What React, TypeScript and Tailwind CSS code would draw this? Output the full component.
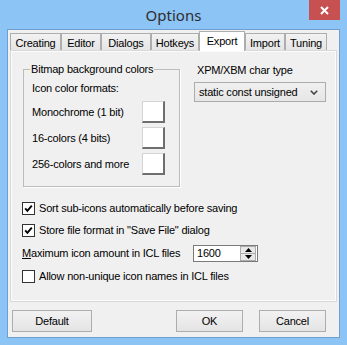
import React from 'react';

const tabs = [
  { name: 'Creating', w: 'w-[51px]' },
  { name: 'Editor', w: 'w-[40px]' },
  { name: 'Dialogs', w: 'w-[50px]' },
  { name: 'Hotkeys', w: 'w-[48px]' },
  { name: 'Export', w: 'w-[46px]', active: true },
  { name: 'Import', w: 'w-[40px]' },
  { name: 'Tuning', w: 'w-[42px]' },
];

function ColorBox() {
  return (
    <div className="w-[23px] h-[22px] bg-white border-l border-t border-[#d4d4d4] border-r-2 border-b-2 border-r-[#6e6e6e] border-b-[#6e6e6e]" />
  );
}

function CheckBox({ checked }: { checked?: boolean }) {
  return (
    <div className="w-[13px] h-[13px] border border-[#333] bg-white flex items-center justify-center">
      {checked && (
        <svg width="11" height="11" viewBox="0 0 11 11">
          <polyline points="2.2,5.4 4.4,7.8 8.8,2.6" fill="none" stroke="#000" strokeWidth="1.9" />
        </svg>
      )}
    </div>
  );
}

function Button({ label, className }: { label: string; className: string }) {
  return (
    <button className={`h-[22px] border border-[#adadad] bg-gradient-to-b from-[#f2f2f2] to-[#e4e4e4] text-black flex items-center justify-center ${className}`}>
      {label}
    </button>
  );
}

export default function App() {
  return (
    <div className="w-[347px] h-[345px] bg-[#8cc4f6] overflow-hidden font-['Liberation_Sans',Arial,sans-serif] text-[11px] tracking-[-0.2px] text-black leading-[13px]">

      {/* Title bar */}
      <div className="h-[29px] grid grid-cols-[1fr_auto_1fr]">
        <div />
        <div className="flex items-center font-['Noto_Sans',sans-serif] text-[15px] tracking-normal text-[#2e2e2e] pt-[1px]">Options</div>
        <div className="flex justify-end items-start pr-[7px]">
          <div className="w-[31px] h-[20px] bg-[#c75050] flex items-center justify-center">
            <svg width="9" height="9" viewBox="0 0 9 9">
              <path d="M1 1 L8 8 M8 1 L1 8" stroke="#fff" strokeWidth="2" />
            </svg>
          </div>
        </div>
      </div>

      {/* Client area */}
      <div className="ml-[7px] w-[333px] h-[309px] border border-[#6f9fcf] bg-[#f0f0f0] flex flex-col">

        {/* Tabs */}
        <div className="h-[20px] flex items-end pl-[2px]">
          {tabs.map(t =>
            t.active ? (
              <div key={t.name} className={`${t.w} h-[20px] -mb-[1px] relative z-10 bg-white border border-b-0 border-[#adadad] flex justify-center pt-[3px]`}>
                {t.name}
              </div>
            ) : (
              <div key={t.name} className={`${t.w} h-[17px] bg-gradient-to-b from-[#f2f2f2] to-[#e5e5e5] border border-b-0 border-[#adadad] flex justify-center pt-[3px]`}>
                {t.name}
              </div>
            )
          )}
        </div>

        {/* Panel */}
        <div className="ml-[2px] w-[327px] h-[252px] border border-[#d9d9d9] bg-[#f0f0f0] shadow-[inset_0_0_0_1px_#fbfbfb]">

          <div className="flex pt-[12px] pl-[12px]">
            <fieldset className="w-[157px] h-[124px] border border-[#bcbcbc] shadow-[1px_1px_0_#fff] px-[6px]">
              <legend className="px-[1px]">Bitmap background colors</legend>
              <div className="pl-[2px] pr-[8px] pt-[6px] flex flex-col">
                <div className="h-[13px]">Icon color formats:</div>
                <div className="mt-[6px] flex flex-col gap-[4px]">
                  <div className="flex items-center justify-between">
                    <span>Monochrome (1 bit)</span>
                    <ColorBox />
                  </div>
                  <div className="flex items-center justify-between">
                    <span>16-colors (4 bits)</span>
                    <ColorBox />
                  </div>
                  <div className="flex items-center justify-between">
                    <span>256-colors and more</span>
                    <ColorBox />
                  </div>
                </div>
              </div>
            </fieldset>

            <div className="ml-[14px] flex flex-col">
              <div className="mt-[1px] pl-[3px] h-[13px]">XPM/XBM char type</div>
              <div className="mt-[5px] w-[132px] h-[20px] border border-[#acacac] bg-gradient-to-b from-[#f0f0f0] to-[#e6e6e6] flex items-center justify-between pl-[4px] pr-[7px]">
                <span>static const unsigned</span>
                <svg width="8" height="5" viewBox="0 0 8 5">
                  <path d="M0.8 0.8 L4 4 L7.2 0.8" fill="none" stroke="#444" strokeWidth="1.6" />
                </svg>
              </div>
            </div>
          </div>

          <div className="mt-[10px] pl-[11px] flex flex-col">
            <div className="h-[22px] flex items-center gap-[4px]">
              <CheckBox checked />
              <span>Sort sub-icons automatically before saving</span>
            </div>
            <div className="h-[22px] flex items-center gap-[4px]">
              <CheckBox checked />
              <span>Store file format in "Save File" dialog</span>
            </div>
            <div className="h-[24px] flex items-center">
              <span className="w-[171px] shrink-0"><span className="underline">M</span>aximum icon amount in ICL files</span>
              <div className="w-[65px] h-[17px] shrink-0 border border-[#7a7a7a] bg-white flex items-center justify-between pl-[3px] pr-[1px]">
                <span>1600</span>
                <div className="w-[16px] h-[15px] shrink-0 flex flex-col">
                  <div className="h-[8px] bg-[#e8e8e8] border border-[#acacac] flex items-center justify-center">
                    <svg width="7" height="4" viewBox="0 0 7 4"><path d="M0 4 L3.5 0 L7 4 Z" fill="#000" /></svg>
                  </div>
                  <div className="h-[7px] bg-[#e8e8e8] border border-t-0 border-[#acacac] flex items-center justify-center">
                    <svg width="7" height="4" viewBox="0 0 7 4"><path d="M0 0 L3.5 4 L7 0 Z" fill="#000" /></svg>
                  </div>
                </div>
              </div>
            </div>
            <div className="h-[22px] flex items-center gap-[4px]">
              <CheckBox />
              <span>Allow non-unique icon names in ICL files</span>
            </div>
          </div>
        </div>

        {/* Buttons */}
        <div className="mt-[8px] flex">
          <Button label="Default" className="ml-[4px] w-[80px]" />
          <Button label="OK" className="ml-[84px] w-[67px]" />
          <Button label="Cancel" className="ml-[16px] w-[67px]" />
        </div>
      </div>
    </div>
  );
}
